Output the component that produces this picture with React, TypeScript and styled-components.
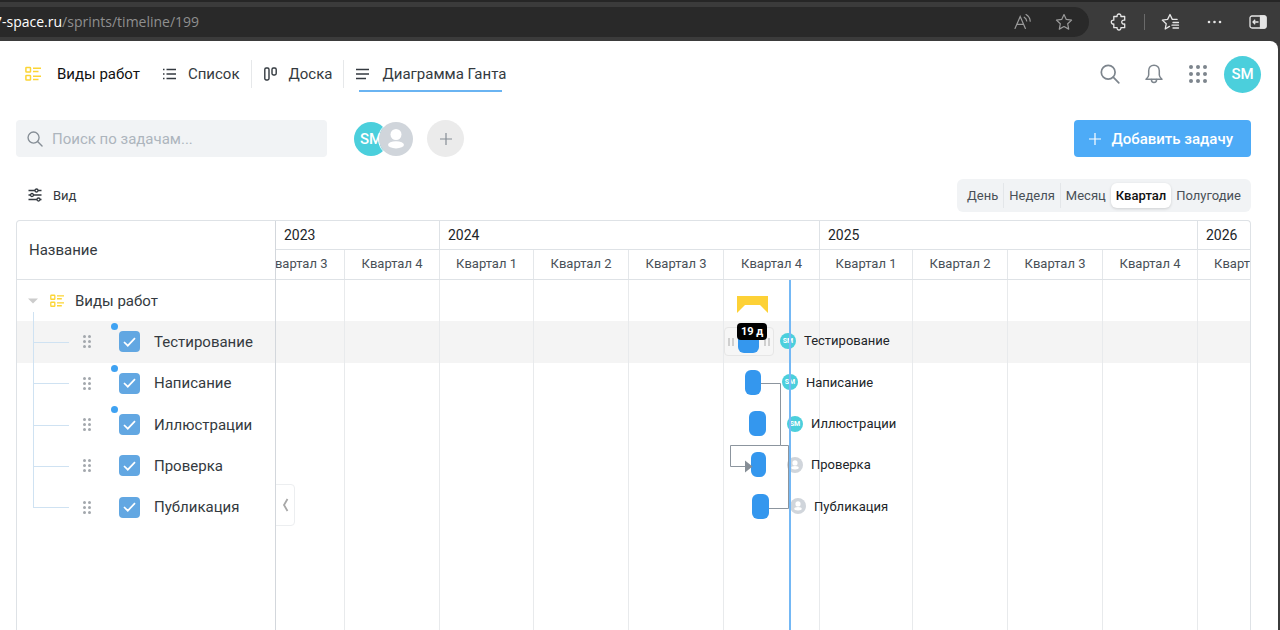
import React from 'react';
import styled, { createGlobalStyle, css } from 'styled-components';

const GlobalStyle = createGlobalStyle`
  * { box-sizing: border-box; }
  body {
    margin: 0;
    background: #3b3b3b;
    font-family: Roboto, "Liberation Sans", sans-serif;
    color: #343a40;
  }
  button, input { font-family: inherit; }
`;

const Window = styled.div`
  display: flex;
  flex-direction: column;
  height: 100vh;
  overflow: hidden;
`;

const plainButton = css`
  display: flex;
  align-items: center;
  justify-content: center;
  padding: 0;
  border: 0;
  background: none;
  cursor: pointer;
`;

/* Browser chrome */

const BrowserBar = styled.div`
  display: flex;
  align-items: center;
  flex: none;
  height: 41px;
  border-top: 2px solid #262626;
  background: #3b3b3b;
`;

const AddressBar = styled.div`
  display: flex;
  align-items: center;
  flex: 1;
  min-width: 0;
  height: 30px;
  margin-right: 8px;
  padding-right: 5px;
  border-radius: 0 15px 15px 0;
  background: #292929;
  overflow: hidden;
`;

const Address = styled.div`
  flex: 1;
  margin-left: -6px;
  font: 14px/20px "Open Sans", "Noto Sans", sans-serif;
  white-space: nowrap;
  color: #8f8f8f;
`;

const Domain = styled.span`
  color: #ffffff;
`;

const ChromeButton = styled.button<{ $muted?: boolean }>`
  ${plainButton}
  width: ${(p) => (p.$muted ? 41 : 44)}px;
  height: 30px;
  color: ${(p) => (p.$muted ? '#9a9a9a' : '#e6e6e6')};
`;

const ChromeDivider = styled.div`
  width: 1px;
  height: 16px;
  margin: 0 3px;
  background: #6a6a6a;
`;

/* Application shell */

const Page = styled.main`
  display: flex;
  flex-direction: column;
  flex: 1;
  min-height: 0;
  margin-right: 2px;
  padding: 0 27px 0 16px;
  border-radius: 0 8px 0 0;
  background: #ffffff;
`;

const Header = styled.header`
  display: flex;
  align-items: center;
  justify-content: space-between;
  flex: none;
  height: 66px;
  margin-right: -10px;
`;

const Tabs = styled.nav`
  display: flex;
  align-items: center;
`;

const Project = styled.a`
  display: flex;
  align-items: center;
  gap: 16px;
  padding: 0 11px 0 9px;
  font-size: 15px;
  line-height: 28px;
  text-decoration: none;
  color: #111111;
`;

const Tab = styled.a<{ $active?: boolean }>`
  position: relative;
  display: flex;
  align-items: center;
  gap: 12px;
  padding: 0 11px 0 12px;
  font-size: 15px;
  line-height: 28px;
  text-decoration: none;
  color: #343a40;

  & + & { border-left: 1px solid #e6e8ea; }

  &::after {
    content: '';
    display: ${(p) => (p.$active ? 'block' : 'none')};
    position: absolute;
    right: 15px;
    bottom: -4px;
    left: 15px;
    height: 2px;
    background: #6ab4f2;
  }
`;

const Actions = styled.div`
  display: flex;
  align-items: center;
  gap: 20px;
`;

const IconButton = styled.button`
  ${plainButton}
  width: 24px;
  height: 24px;
  color: #7d858d;
`;

const Avatar = styled.span<{ $size: number; $empty?: boolean }>`
  display: flex;
  align-items: center;
  justify-content: center;
  flex: none;
  width: ${(p) => p.$size}px;
  height: ${(p) => p.$size}px;
  border-radius: 50%;
  background: ${(p) => (p.$empty ? '#d0d5db' : '#4bcfdc')};
  color: #ffffff;
  font-size: ${(p) => (p.$size > 20 ? 15 : 7)}px;
  font-weight: ${(p) => (p.$size > 20 ? 500 : 700)};
`;

const AccountButton = styled.button`
  ${plainButton}
  margin-left: -6px;
`;

/* Toolbar */

const Toolbar = styled.div`
  display: flex;
  align-items: center;
  flex: none;
  height: 63px;
`;

const Search = styled.label`
  display: flex;
  align-items: center;
  gap: 9px;
  width: 311px;
  height: 37px;
  padding: 0 11px;
  border-radius: 4px;
  background: #f1f3f5;
  color: #868e96;
`;

const SearchInput = styled.input`
  flex: 1;
  min-width: 0;
  padding: 0;
  border: 0;
  outline: 0;
  background: none;
  font-size: 15px;
  line-height: 20px;
  color: #343a40;
  &::placeholder { color: #adb5bd; }
`;

const Members = styled.div`
  display: flex;
  align-items: center;
  margin: 0 13px 0 26px;
`;

const Member = styled.span`
  display: flex;
  border: 1px solid #ffffff;
  border-radius: 50%;
  & + & { margin-left: -11px; }
`;

const AddMember = styled.button`
  ${plainButton}
  width: 37px;
  height: 37px;
  border-radius: 50%;
  background: #ebebeb;
  color: #868e96;
`;

const AddTask = styled.button`
  ${plainButton}
  gap: 10px;
  height: 37px;
  margin-left: auto;
  padding: 0 18px 0 15px;
  border-radius: 4px;
  background: #4dabf7;
  color: #ffffff;
  font-size: 15px;
  font-weight: 500;
`;

const ViewBar = styled.div`
  display: flex;
  align-items: center;
  justify-content: space-between;
  flex: none;
  height: 50px;
`;

const ViewButton = styled.button`
  ${plainButton}
  gap: 11px;
  margin-left: 12px;
  font-size: 13px;
  color: #343a40;
`;

const Segments = styled.div`
  display: flex;
  align-items: center;
  height: 33px;
  padding: 0 5px;
  border-radius: 6px;
  background: #f1f3f5;
`;

const Segment = styled.button<{ $active?: boolean }>`
  ${plainButton}
  height: 25px;
  padding: 0 5px;
  border-radius: 6px;
  font-size: 13px;
  color: #495057;
  ${(p) =>
    p.$active &&
    css`
      background: #ffffff;
      font-weight: 500;
      color: #111111;
      box-shadow: 0 1px 3px rgba(0, 0, 0, 0.15);
    `}
`;

const SegmentDivider = styled.span`
  width: 1px;
  height: 25px;
  background: #e3e6e9;
`;

/* Gantt */

const Gantt = styled.section`
  display: flex;
  flex: 1;
  min-height: 0;
  border: 1px solid #dee2e6;
  border-bottom: 0;
  border-radius: 4px 4px 0 0;
  overflow: hidden;
`;

const TaskPane = styled.div`
  flex: none;
  width: 259px;
  border-right: 1px solid #d3d7dc;
`;

const TaskHeader = styled.div`
  display: flex;
  align-items: center;
  height: 59px;
  padding-left: 12px;
  border-bottom: 1px solid #dee2e6;
  font-size: 15px;
`;

const rowsGrid = css`
  display: grid;
  grid-auto-rows: 1fr;
  height: 248px;
  margin: 0;
  padding: 0;
  list-style: none;
`;

const TaskRows = styled.ul`
  ${rowsGrid}
`;

const GroupRow = styled.li`
  display: flex;
  align-items: center;
  padding-left: 10px;
  font-size: 15px;
`;

const GroupName = styled.span`
  margin-left: 11px;
`;

const Toggle = styled.button`
  ${plainButton}
  width: 11px;
  height: 16px;
  margin-right: 12px;
`;

const TaskRow = styled.li<{ $active?: boolean; $last?: boolean }>`
  position: relative;
  display: flex;
  align-items: center;
  padding-left: 66px;
  background: ${(p) => (p.$active ? '#f4f4f4' : 'transparent')};
  font-size: 15px;

  &::before, &::after {
    content: '';
    position: absolute;
    left: 16px;
    background: #cfe2f2;
  }
  &::before {
    top: ${(p) => (p.$active ? -9 : 0)}px;
    bottom: ${(p) => (p.$last ? '50%' : 0)};
    width: 1px;
  }
  &::after {
    top: 50%;
    width: 36px;
    height: 1px;
  }
`;

const TaskLabel = styled.label`
  position: relative;
  display: flex;
  align-items: center;
  gap: 14px;
  margin-left: 28px;
`;

const Unread = styled.span`
  position: absolute;
  top: -8px;
  left: -8px;
  width: 7px;
  height: 7px;
  border-radius: 50%;
  background: #3fa2f2;
`;

const Checkbox = styled.input`
  appearance: none;
  width: 21px;
  height: 21px;
  margin: 0;
  border-radius: 4px;
  background: #62a7e2;
`;

const CheckBoxWrap = styled.span`
  display: grid;
  place-items: center;
  & > * { grid-area: 1 / 1; }
  & > svg { pointer-events: none; }
`;

const Chart = styled.div`
  position: relative;
  display: flex;
  flex-direction: column;
  flex: 1;
  min-width: 0;
  overflow: hidden;
`;

const Years = styled.div`
  display: flex;
  flex: none;
  height: 29px;
  border-bottom: 1px solid #dee2e6;
`;

const Year = styled.div<{ $width: number }>`
  flex: none;
  width: ${(p) => p.$width}px;
  padding-left: 8px;
  border-right: 1px solid #dee2e6;
  font-size: 14px;
  line-height: 28px;
  color: #212529;
`;

const Quarters = styled.div`
  display: flex;
  flex: none;
  height: 30px;
  margin-left: -26px;
  border-bottom: 1px solid #dee2e6;
`;

const Quarter = styled.div<{ $width: number }>`
  flex: none;
  width: ${(p) => p.$width}px;
  border-right: 1px solid #e4e7ea;
  font-size: 13px;
  line-height: 28px;
  text-align: center;
  color: #495057;
`;

const Canvas = styled.div`
  display: grid;
  grid-template-columns: minmax(0, 1fr);
  flex: 1;
  min-height: 0;
  & > * { grid-area: 1 / 1; }
`;

const Columns = styled.div`
  display: flex;
  z-index: 1;
  margin-left: -26px;
  pointer-events: none;
`;

const Column = styled.div<{ $width: number }>`
  flex: none;
  width: ${(p) => p.$width}px;
  border-right: 1px solid #e8eaec;
`;

const ChartRows = styled.ul`
  ${rowsGrid}
`;

const ChartRow = styled.li<{ $active?: boolean }>`
  position: relative;
  background: ${(p) => (p.$active ? '#f4f4f4' : 'transparent')};
`;

const Item = styled.div<{ $left: number }>`
  position: absolute;
  z-index: 2;
  top: 0;
  bottom: 2px;
  left: ${(p) => p.$left}px;
  display: flex;
  align-items: center;
  font-size: 13px;
  color: #212529;
`;

const Bar = styled.div<{ $width: number }>`
  width: ${(p) => p.$width}px;
  height: 25px;
  margin-right: 21px;
  border-radius: 6px;
  background: #3497ee;
`;

const Assignee = styled.span`
  margin-right: 8px;
`;

const Summary = styled.svg`
  position: absolute;
  top: 16px;
  left: 461px;
  z-index: 2;
`;

const Grip = styled.div`
  position: absolute;
  z-index: 1;
  top: 6px;
  left: 448px;
  display: flex;
  align-items: center;
  justify-content: space-between;
  width: 50px;
  height: 29px;
  padding: 0 3px;
  border: 1px solid #e6e6e6;
  border-radius: 4px;
  background: #f6f6f6;

  &::before, &::after {
    content: '';
    width: 2px;
    height: 8px;
    border: solid #cfcfcf;
    border-width: 0 2px;
  }
`;

const Duration = styled.span`
  position: absolute;
  z-index: 3;
  top: 2px;
  left: 461px;
  padding: 0 4px;
  border-radius: 4px;
  background: #000000;
  color: #ffffff;
  font-size: 11px;
  font-weight: 700;
  line-height: 17px;
  white-space: nowrap;
`;

const Links = styled.svg`
  position: relative;
  z-index: 4;
  pointer-events: none;
`;

const Today = styled.div`
  position: relative;
  z-index: 3;
  width: 2px;
  margin-left: 513px;
  background: #74b8f5;
`;

const Collapse = styled.button`
  ${plainButton}
  position: absolute;
  top: 263px;
  left: -1px;
  z-index: 5;
  width: 20px;
  height: 42px;
  border: 1px solid #eceef0;
  border-radius: 0 4px 4px 0;
  background: #ffffff;
`;

const years = [
  { label: '2023', width: 164 },
  { label: '2024', width: 380 },
  { label: '2025', width: 378 },
  { label: '2026', width: 378 },
];

const quarters = [
  { label: 'Квартал 3', width: 95 },
  { label: 'Квартал 4', width: 95 },
  { label: 'Квартал 1', width: 94 },
  { label: 'Квартал 2', width: 95 },
  { label: 'Квартал 3', width: 95 },
  { label: 'Квартал 4', width: 96 },
  { label: 'Квартал 1', width: 93 },
  { label: 'Квартал 2', width: 95 },
  { label: 'Квартал 3', width: 95 },
  { label: 'Квартал 4', width: 95 },
  { label: 'Квартал 1', width: 94 },
];

const tasks = [
  { name: 'Тестирование', start: 462, width: 21, unread: true, assigned: true, duration: '19 д' },
  { name: 'Написание', start: 469, width: 16, unread: true, assigned: true },
  { name: 'Иллюстрации', start: 473, width: 17, unread: true, assigned: true },
  { name: 'Проверка', start: 475, width: 15, unread: false, assigned: false },
  { name: 'Публикация', start: 476, width: 17, unread: false, assigned: false },
];

const scales = ['День', 'Неделя', 'Месяц', 'Квартал', 'Полугодие'];

const ProjectIcon = ({ size = 16 }: { size?: number }) => (
  <svg width={size} height={size} viewBox="0 0 16 16" fill="none" stroke="#fcd535" strokeWidth="1.5">
    <rect x="0.9" y="1.4" width="4.6" height="4.6" rx="0.6" />
    <rect x="0.9" y="9.4" width="4.6" height="4.6" rx="0.6" />
    <path d="M8 2.2h8M8 5.4h5.5M8 10.2h8M8 13.4h5.5" />
  </svg>
);

const ListIcon = () => (
  <svg width="13" height="14" viewBox="0 0 13 14" stroke="#343a40" strokeWidth="1.4">
    <path d="M3.5 2.5H13M3.5 7H13M3.5 11.5H13M0 2.5h1.5M0 7h1.5M0 11.5h1.5" />
  </svg>
);

const BoardIcon = () => (
  <svg width="13" height="14" viewBox="0 0 13 14" fill="none" stroke="#343a40" strokeWidth="1.4">
    <rect x="0.8" y="1" width="4.2" height="12" rx="1.4" />
    <rect x="8" y="1" width="4.2" height="7" rx="1.4" />
  </svg>
);

const TimelineIcon = () => (
  <svg width="14" height="14" viewBox="0 0 14 14" stroke="#343a40" strokeWidth="1.4">
    <path d="M0 2.5h13M0 7h13M0 11.5h10" />
  </svg>
);

const SearchIcon = ({ size }: { size: number }) => (
  <svg width={size} height={size} viewBox="0 0 20 20" fill="none" stroke="currentColor" strokeWidth="1.7" strokeLinecap="round">
    <circle cx="8.2" cy="8.2" r="6.9" />
    <path d="M13.2 13.2l5.6 5.6" />
  </svg>
);

const BellIcon = () => (
  <svg width="20" height="22" viewBox="0 0 20 22" fill="none" stroke="currentColor" strokeWidth="1.5" strokeLinejoin="round" strokeLinecap="round">
    <path d="M10 2.2c-3.300 0-5.300 2.500-5.300 5.600v4.100c0 1.500-.8 2.600-2.700 4.300h16c-1.900-1.700-2.700-2.800-2.700-4.300V7.800c0-3.100-2-5.600-5.300-5.600z" />
    <path d="M7.400 16.400c0 1.700 1 3 2.600 3s2.600-1.300 2.600-3" />
  </svg>
);

const DotsIcon = ({ columns, gap, r, color }: { columns: number; gap: number; r: number; color: string }) => (
  <svg width={(columns - 1) * gap + 2 * r} height={2 * gap + 2 * r} fill={color}>
    {[0, 1, 2].map((row) =>
      Array.from({ length: columns }, (_, col) => <circle key={`${row}-${col}`} cx={r + col * gap} cy={r + row * gap} r={r} />),
    )}
  </svg>
);

const PlusIcon = ({ size }: { size: number }) => (
  <svg width={size} height={size} viewBox="0 0 12 12" stroke="currentColor" strokeWidth="1.2">
    <path d="M6 0v12M0 6h12" />
  </svg>
);

const PersonIcon = ({ size }: { size: number }) => (
  <svg width={size} height={size} viewBox="0 0 34 34" fill="#ffffff">
    <circle cx="17" cy="12.500" r="5.500" />
    <ellipse cx="17" cy="22.800" rx="8" ry="3.600" />
  </svg>
);

const SlidersIcon = () => (
  <svg width="14" height="14" viewBox="0 0 14 14" fill="#ffffff" stroke="#343a40" strokeWidth="1.3">
    <path d="M0.500 2.500h13M0.500 7h13M0.500 11.500h13" />
    <circle cx="8.500" cy="2.500" r="1.500" />
    <circle cx="4" cy="7" r="1.500" />
    <circle cx="10.500" cy="11.500" r="1.500" />
  </svg>
);

const ReadAloudIcon = () => (
  <svg width="18" height="18" viewBox="0 0 18 18" fill="none" stroke="currentColor" strokeWidth="1.2" strokeLinecap="round">
    <path d="M1 15.500L6.200 3.500l5.200 12M2.800 11.300h6.800" />
    <path d="M10.200 4.200c1.400.9 2.300 2.200 2.500 3.800M12 1.600c2.500 1.400 4 3.800 4.200 6.600" />
  </svg>
);

const StarIcon = () => (
  <svg width="18" height="18" viewBox="0 0 18 18" fill="none" stroke="currentColor" strokeWidth="1.200" strokeLinejoin="round">
    <path d="M9 1.500l2.300 4.900 5.300.7-3.900 3.700 1 5.300L9 13.500l-4.700 2.600 1-5.300L1.400 7.100l5.300-.7z" />
  </svg>
);

const PuzzleIcon = () => (
  <svg width="18" height="18" viewBox="0 0 18 18" fill="none" stroke="currentColor" strokeWidth="1.300" strokeLinejoin="round">
    <path d="M3.800 3.500h3.300c-.2-1.500.6-2.500 1.900-2.500s2.100 1 1.900 2.500h3.800v3.700c-1.900-.3-3 .6-3 1.900s1.100 2.200 3 1.900v3.700h-3.800c.2 1.400-.6 2.300-1.900 2.300s-2.100-.9-1.900-2.300H3.800V11C2.300 11.200 1.300 10.400 1.300 9.100s1-2.100 2.500-1.900z" />
  </svg>
);

const FavoritesIcon = () => (
  <svg width="19" height="18" viewBox="0 0 19 18" fill="none" stroke="currentColor" strokeWidth="1.300" strokeLinejoin="round" strokeLinecap="round">
    <path d="M8.500 13.400L4.200 16l1-5.200L1.300 7.100l5.300-.7L9 1.500l2.300 4.900h4.800" />
    <path d="M12 9.500h5.500M11 12.200h6.500M12 15h5.500" />
  </svg>
);

const MoreIcon = () => (
  <svg width="16" height="4" viewBox="0 0 16 4" fill="currentColor">
    <circle cx="3" cy="2" r="1.300" />
    <circle cx="8.500" cy="2" r="1.300" />
    <circle cx="14" cy="2" r="1.300" />
  </svg>
);

const SidebarIcon = () => (
  <svg width="18" height="14" viewBox="0 0 18 14" fill="none" stroke="currentColor" strokeWidth="1.300">
    <rect x="1" y="1" width="16" height="12" rx="2" />
    <path d="M11.500 1H15a2 2 0 0 1 2 2v8a2 2 0 0 1-2 2h-3.500z" fill="currentColor" />
    <path d="M9.500 7H4M6.200 4.800L4 7l2.200 2.200" />
  </svg>
);

const TaskAssignee = ({ assigned }: { assigned: boolean }) => (
  <Assignee>
    <Avatar $size={16} $empty={!assigned}>
      {assigned ? 'SM' : <PersonIcon size={16} />}
    </Avatar>
  </Assignee>
);

export default function App() {
  return (
    <Window>
      <GlobalStyle />
      <BrowserBar>
        <AddressBar>
          <Address>
            <Domain>7-space.ru</Domain>/sprints/timeline/199
          </Address>
          <ChromeButton $muted aria-label="Прочесть вслух"><ReadAloudIcon /></ChromeButton>
          <ChromeButton $muted aria-label="В избранное"><StarIcon /></ChromeButton>
        </AddressBar>
        <ChromeButton aria-label="Расширения"><PuzzleIcon /></ChromeButton>
        <ChromeDivider />
        <ChromeButton aria-label="Избранное"><FavoritesIcon /></ChromeButton>
        <ChromeButton aria-label="Ещё"><MoreIcon /></ChromeButton>
        <ChromeButton aria-label="Боковая панель"><SidebarIcon /></ChromeButton>
      </BrowserBar>

      <Page>
        <Header>
          <Tabs>
            <Project href="#project"><ProjectIcon />Виды работ</Project>
            <Tab href="#list"><ListIcon />Список</Tab>
            <Tab href="#board"><BoardIcon />Доска</Tab>
            <Tab href="#gantt" $active><TimelineIcon />Диаграмма Ганта</Tab>
          </Tabs>
          <Actions>
            <IconButton aria-label="Поиск"><SearchIcon size={20} /></IconButton>
            <IconButton aria-label="Уведомления"><BellIcon /></IconButton>
            <IconButton aria-label="Приложения"><DotsIcon columns={3} gap={7} r={2} color="#7d858d" /></IconButton>
            <AccountButton aria-label="Профиль"><Avatar $size={37}>SM</Avatar></AccountButton>
          </Actions>
        </Header>

        <Toolbar>
          <Search>
            <SearchIcon size={16} />
            <SearchInput type="search" aria-label="Поиск по задачам" placeholder="Поиск по задачам..." />
          </Search>
          <Members>
            <Member><Avatar $size={34}>SM</Avatar></Member>
            <Member><Avatar $size={34} $empty><PersonIcon size={34} /></Avatar></Member>
          </Members>
          <AddMember aria-label="Добавить участника"><PlusIcon size={12} /></AddMember>
          <AddTask><PlusIcon size={12} />Добавить задачу</AddTask>
        </Toolbar>

        <ViewBar>
          <ViewButton><SlidersIcon />Вид</ViewButton>
          <Segments>
            {scales.map((scale, i) => (
              <React.Fragment key={scale}>
                {(i === 1 || i === 2) && <SegmentDivider />}
                <Segment $active={scale === 'Квартал'} aria-pressed={scale === 'Квартал'}>{scale}</Segment>
              </React.Fragment>
            ))}
          </Segments>
        </ViewBar>

        <Gantt>
          <TaskPane>
            <TaskHeader>Название</TaskHeader>
            <TaskRows>
              <GroupRow>
                <Toggle aria-label="Свернуть">
                  <svg width="10" height="6" fill="#cccccc"><path d="M0 0.500h10L5 5.500z" /></svg>
                </Toggle>
                <ProjectIcon size={14} />
                <GroupName>Виды работ</GroupName>
              </GroupRow>
              {tasks.map((task, i) => (
                <TaskRow key={task.name} $active={i === 0} $last={i === tasks.length - 1}>
                  <DotsIcon columns={2} gap={5} r={1.500} color="#a3a8ad" />
                  <TaskLabel>
                    <CheckBoxWrap>
                      <Checkbox type="checkbox" defaultChecked />
                      <svg width="13" height="10" viewBox="0 0 13 10" fill="none" stroke="#ffffff" strokeWidth="1.700">
                        <path d="M1 5l3.800 3.700L12 1.200" />
                      </svg>
                    </CheckBoxWrap>
                    {task.unread && <Unread />}
                    {task.name}
                  </TaskLabel>
                </TaskRow>
              ))}
            </TaskRows>
          </TaskPane>

          <Chart>
            <Years>
              {years.map((y) => <Year key={y.label} $width={y.width}>{y.label}</Year>)}
            </Years>
            <Quarters>
              {quarters.map((q, i) => <Quarter key={i} $width={q.width}>{q.label}</Quarter>)}
            </Quarters>
            <Canvas>
              <Columns>
                {quarters.map((q, i) => <Column key={i} $width={q.width} />)}
              </Columns>
              <ChartRows>
                <ChartRow>
                  <Summary width="31" height="17" fill="#fdd136">
                    <path d="M0 0h31v17l-8-8H8l-8 8z" />
                  </Summary>
                </ChartRow>
                {tasks.map((task, i) => (
                  <ChartRow key={task.name} $active={i === 0}>
                    {task.duration && <Grip />}
                    <Item $left={task.start}>
                      <Bar $width={task.width} />
                      <TaskAssignee assigned={task.assigned} />
                      {task.name}
                    </Item>
                    {task.duration && <Duration>{task.duration}</Duration>}
                  </ChartRow>
                ))}
              </ChartRows>
              <Links width="520" height="248" fill="none" stroke="#8c959e">
                <path d="M485 103.500h19.500v62h-50v21h17" />
                <path d="M504.500 165.500h8v63H493" />
                <path d="M469 180.500v12l7.500-6z" fill="#868e96" stroke="none" />
              </Links>
              <Today />
            </Canvas>
            <Collapse aria-label="Скрыть панель">
              <svg width="7" height="14" fill="none" stroke="#a8a8a8" strokeWidth="1.800"><path d="M5.500 1L2 7l3.500 6" /></svg>
            </Collapse>
          </Chart>
        </Gantt>
      </Page>
    </Window>
  );
}
